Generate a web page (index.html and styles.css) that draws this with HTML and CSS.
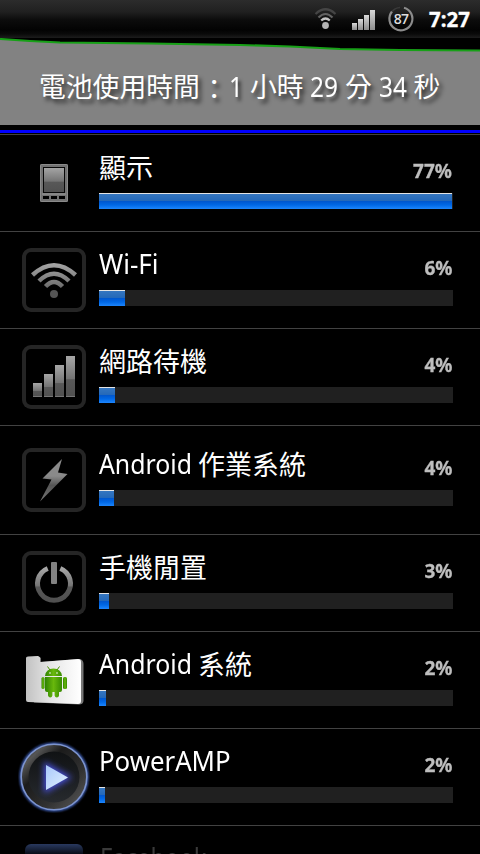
FILE: index.html
```
<!DOCTYPE html>
<html lang="zh-Hant">
<head>
<meta charset="utf-8">
<title>電池使用</title>
<link rel="stylesheet" href="styles.css">
</head>
<body>
<svg class="defs" width="0" height="0">
  <defs>
    <linearGradient id="metal" x1="0" y1="0" x2="0" y2="1"><stop offset="0" stop-color="#a6a6a6"/><stop offset=".55" stop-color="#747474"/><stop offset=".58" stop-color="#585858"/><stop offset="1" stop-color="#505050"/></linearGradient>
    <linearGradient id="bolt" x1="0" y1="0" x2="0" y2="1"><stop offset="0" stop-color="#8a8a8a"/><stop offset=".4" stop-color="#8a8a8a"/><stop offset=".62" stop-color="#555"/><stop offset="1" stop-color="#777"/></linearGradient>
    <linearGradient id="wave" gradientUnits="userSpaceOnUse" x1="0" y1="14" x2="0" y2="50"><stop offset="0" stop-color="#a8a8a8"/><stop offset=".6" stop-color="#777"/><stop offset="1" stop-color="#4c4c4c"/></linearGradient>
    <linearGradient id="silver" x1="0" y1="0" x2="0" y2="1"><stop offset="0" stop-color="#d8d8d8"/><stop offset="1" stop-color="#8c8c8c"/></linearGradient>
    <linearGradient id="folder" x1="0" y1="0" x2="1" y2="0"><stop offset="0" stop-color="#c2c2c2"/><stop offset=".45" stop-color="#e6e6e6"/><stop offset="1" stop-color="#fff"/></linearGradient>
    <linearGradient id="droid" x1="0" y1="0" x2="1" y2="0"><stop offset="0" stop-color="#2f8200"/><stop offset=".5" stop-color="#68b80c"/><stop offset="1" stop-color="#378a00"/></linearGradient>
    <linearGradient id="ring" x1="0" y1="0" x2="1" y2="1"><stop offset="0" stop-color="#222"/><stop offset=".18" stop-color="#555"/><stop offset=".35" stop-color="#1b1b1b"/><stop offset=".65" stop-color="#303030"/><stop offset=".85" stop-color="#4b4b4b"/><stop offset="1" stop-color="#222"/></linearGradient>
    <linearGradient id="disc" x1="0" y1="0" x2="0" y2="1"><stop offset="0" stop-color="#101214"/><stop offset="1" stop-color="#272a2e"/></linearGradient>
    <linearGradient id="play" x1="0" y1="0" x2="1" y2="1"><stop offset="0" stop-color="#a9c8fb"/><stop offset="1" stop-color="#e2f2ff"/></linearGradient>
    <filter id="glow" x="-60%" y="-60%" width="220%" height="220%"><feGaussianBlur stdDeviation="3"/></filter>
    <filter id="soft" x="-20%" y="-20%" width="140%" height="140%"><feGaussianBlur stdDeviation="1"/></filter>
  </defs>
</svg>

<div class="screen">
  <header class="status">
    <svg class="st-wifi" width="24" height="24" viewBox="0 0 24 24" fill="none">
      <path d="M1.500 7Q11.500-2.500 21.500 7" stroke="#454545" stroke-width="2.200"/>
      <path d="M4.500 10.500Q11.500 3.500 18.500 10.500" stroke="#626262" stroke-width="2.200"/>
      <path d="M7.200 13.500Q11.500 9.500 15.800 13.500" stroke="#c4c4c4" stroke-width="2.200"/>
      <circle cx="11.500" cy="18.500" r="3.400" fill="#b4b4b4"/>
    </svg>
    <svg class="st-signal" width="23" height="20" viewBox="0 0 23 20" fill="url(#silver)">
      <rect x="0" y="13" width="5" height="7"/><rect x="6" y="9" width="5" height="11"/><rect x="12" y="5" width="5" height="15"/><rect x="18" y="0" width="5" height="20"/>
    </svg>
    <svg class="st-batt" width="28" height="28" viewBox="0 0 28 28">
      <path d="M17 2.700A11.500 11.500 0 1 1 5 6.500" fill="none" stroke="#8c8c8c" stroke-width="2.200"/>
      <path d="M5 6.500A11.500 11.500 0 0 1 13 2.500" fill="none" stroke="#3a3a3a" stroke-width="1.600"/>
      <text x="14" y="19" class="batt-num" text-anchor="middle">87</text>
    </svg>
    <span class="clock">7:27</span>
  </header>

  <section class="chart">
    <svg class="curve" width="480" height="87" viewBox="0 0 480 87">
      <path d="M0 1L30 3L60 4.500L150 5.500L240 7L290 8.500L340 11L400 12L480 12.500V87H0Z" fill="#828282"/>
      <path d="M0 1L30 3L60 4.500L150 5.500L240 7L290 8.500L340 11L400 12L480 12.500" fill="none" stroke="#17a017" stroke-width="2.200"/>
    </svg>
    <div class="summary"><span class="label">電池使用時間<span class="colon">：</span></span><span class="num one">1</span><span class="unit two">小時</span><span class="num">29</span><span class="unit">分</span><span class="num">34</span><span class="unit">秒</span></div>
  </section>
  <div class="timeline"></div>

  <main class="list">
    <div class="row">
      <div class="icon"><svg width="28" height="38" viewBox="0 0 28 38">
        <rect width="28" height="38" rx="1.500" fill="#727272"/>
        <rect x="0.500" y="0.500" width="27" height="37" rx="1" fill="none" stroke="#8a8a8a"/>
        <rect x="3.500" y="3.500" width="21" height="25" fill="url(#metal)" stroke="#080808"/>
        <path d="M2 30H26" stroke="#999"/>
        <path d="M3 32H9V35H3ZM11 32H17V35H11ZM19 32H25V35H19Z" fill="#000"/>
      </svg></div>
      <div class="body"><div class="line"><span class="name">顯示</span><span class="pct">77%</span></div><div class="bar"><i style="width:353px"></i></div></div>
    </div>
    <div class="row">
      <div class="icon"><div class="tile"><svg width="64" height="64" viewBox="0 0 64 64" fill="none" stroke="url(#wave)" stroke-width="4.500">
        <path d="M10.500 27Q32 7.500 53.500 27"/><path d="M17 33Q32 18.500 47 33"/><path d="M23.500 38.500Q32 29.500 40.500 38.500"/>
        <circle cx="32" cy="46" r="4" fill="#555" stroke="none"/>
      </svg></div></div>
      <div class="body"><div class="line"><span class="name"><span class="lat wifi">Wi-Fi</span></span><span class="pct">6%</span></div><div class="bar"><i style="width:26px"></i></div></div>
    </div>
    <div class="row">
      <div class="icon"><div class="tile"><svg width="64" height="64" viewBox="0 0 64 64" fill="url(#metal)">
        <rect x="11" y="38" width="9" height="14"/><rect x="22" y="29" width="9" height="23"/><rect x="33" y="20" width="9" height="32"/><rect x="44" y="11" width="9" height="41"/>
        <path d="M11 51.500H20M22 51.500H31M33 51.500H42M44 51.500H53" stroke="#777"/>
      </svg></div></div>
      <div class="body"><div class="line"><span class="name">網路待機</span><span class="pct">4%</span></div><div class="bar"><i style="width:16px"></i></div></div>
    </div>
    <div class="row tall">
      <div class="icon"><div class="tile"><svg width="64" height="64" viewBox="0 0 64 64">
        <path d="M40 11L20.500 30.500L29.500 31.500L18 53.500L45.500 26L36 24.500Z" fill="url(#bolt)"/>
      </svg></div></div>
      <div class="body"><div class="line"><span class="name"><span class="lat android">Android</span>作業系統</span><span class="pct">4%</span></div><div class="bar"><i style="width:15px"></i></div></div>
    </div>
    <div class="row">
      <div class="icon"><div class="tile"><svg width="64" height="64" viewBox="0 0 64 64" fill="none">
        <path d="M25.700 17.500A16.500 16.500 0 1 0 38.300 17.500" stroke="url(#metal)" stroke-width="5"/>
        <rect x="29" y="11" width="6" height="22" rx="1" fill="#828282"/>
      </svg></div></div>
      <div class="body"><div class="line"><span class="name">手機閒置</span><span class="pct">3%</span></div><div class="bar"><i style="width:10px"></i></div></div>
    </div>
    <div class="row">
      <div class="icon"><svg width="64" height="64" viewBox="0 0 64 64">
        <path d="M6 10Q12 8 17 8.500L19 10V14L58 11Q61.500 12 61.500 16V53Q61 56.500 57 56.500L12 54.500Z" fill="#777"/>
        <path d="M4 10Q4 8.500 6 8.500L16 8L18 9.500V14L56 11Q59 11 59 14V53Q59 56 56 56L6 54Q4 54 4 52Z" fill="url(#folder)"/>
        <g fill="url(#droid)"><path d="M23 28Q24 20.500 31.500 20.500T40 28Z"/><path d="M23 29H40V42Q40 44 38 44H37V47.500Q36.700 49.500 34.800 49.500T32.600 47.500V44H30.400V47.500Q30 49.500 28.300 49.500T26 47.500V44H25Q23 44 23 42Z"/><rect x="19.500" y="29" width="3" height="12" rx="1.500"/><rect x="41" y="29" width="4" height="12" rx="1.500"/></g>
        <path d="M25.500 18.500L28 22M37.500 18.500L35 22" stroke="#458f00"/>
        <circle cx="28" cy="25" r=".8" fill="#fff"/><circle cx="35" cy="25" r=".8" fill="#fff"/>
      </svg></div>
      <div class="body"><div class="line"><span class="name"><span class="lat android">Android</span>系統</span><span class="pct">2%</span></div><div class="bar"><i style="width:7px"></i></div></div>
    </div>
    <div class="row">
      <div class="icon"><svg class="amp" width="72" height="72" viewBox="0 0 72 72">
        <circle cx="36" cy="36" r="33.300" fill="none" stroke="#4162bd" stroke-width="2.500" filter="url(#soft)"/>
        <circle cx="36" cy="36" r="32.800" fill="url(#ring)" stroke="#7d94cd" stroke-width="1.600"/>
        <circle cx="36" cy="36" r="25.500" fill="url(#disc)"/>
        <path d="M28 24L50 36.500L28 49Z" fill="#4650dc" stroke="#4650dc" stroke-width="4" filter="url(#glow)"/>
        <path d="M28 24L50 36.500L28 49Z" fill="url(#play)"/>
      </svg></div>
      <div class="body"><div class="line"><span class="name"><span class="lat poweramp">PowerAMP</span></span><span class="pct">2%</span></div><div class="bar"><i style="width:6px"></i></div></div>
    </div>
    <div class="row last">
      <div class="icon"><div class="fb"></div></div>
      <div class="body"><div class="line"><span class="name"><span class="lat facebook">Facebook</span></span></div></div>
    </div>
  </main>
</div>
</body>
</html>
```
FILE: styles.css
```
* { box-sizing: border-box; }
body { margin: 0; background: #000; }
.defs { display: block; height: 0; }
.screen {
  width: 480px; height: 854px; overflow: hidden; background: #000; color: #fff;
  font-family: "Noto Sans", "Noto Sans CJK TC", sans-serif;
}
.screen svg { display: block; }

.status {
  height: 38px; display: flex; align-items: flex-start; justify-content: flex-end; padding-right: 9px;
  background: linear-gradient(#2c2c2c 0, #202020 12px, #0c0c0c 20px, #030303 30px, #0a0a0a 34px, #1c1c1c 38px);
}
.st-wifi { margin: 7px 14px 0 0; }
.st-signal { margin: 10px 12px 0 0; }
.st-batt { margin: 5px 14px 0 0; }
.batt-num { font: 600 14px "Open Sans", sans-serif; fill: #ddd; letter-spacing: -.7px; }
.clock { width: 42px; font: bold 20.500px/38px "Noto Sans", sans-serif; white-space: nowrap; -webkit-text-stroke: .3px #fff; }

.chart { height: 87px; display: grid; }
.curve, .summary { grid-area: 1 / 1; }
.summary {
  display: flex; padding-left: 39px; height: 96px; line-height: 97px; font-size: 26.800px; white-space: nowrap;
  text-shadow: 3px 4px 4px rgba(0, 0, 0, .65);
}
.label { width: 190px; }
.colon { display: inline-block; line-height: 1; transform: translate(1px, 2px); }
.num { width: 35px; transform: scaleX(.91); transform-origin: 0 50%; }
.num.one { width: 21px; }
.unit { width: 33.500px; }
.unit.two { width: 60px; }
.timeline { height: 10px; border-bottom: 1px solid #424242; background: linear-gradient(#000 5px, #00f 5px, #00f 8px, #000 8px); }

.row { height: 97px; display: flex; align-items: center; border-bottom: 1px solid #424242; }
.row.tall { height: 109px; }
.icon { width: 99px; padding-left: 9px; display: flex; justify-content: center; flex: none; }
.tile { width: 64px; height: 64px; border-radius: 9px; box-shadow: inset 0 0 0 4px #252525; }
.body { width: 354px; height: 96px; }
.line { display: flex; justify-content: space-between; height: 58px; }
.name { font-size: 27px; line-height: 66px; white-space: nowrap; display: flex; }
.lat { display: inline-block; line-height: 64px; transform-origin: 0 50%; transform: scaleX(.92); }
.lat.android { width: 99px; }
.lat.wifi { transform: scaleX(.965); }
.lat.poweramp { transform: scaleX(.955); }
.lat.facebook { transform: scaleX(.88); margin-left: 1px; }
.pct { font: bold 20px/71px "Noto Sans", sans-serif; color: #bebebe; transform: scaleX(.95); transform-origin: 100% 50%; margin-right: 1px; -webkit-text-stroke: .3px #bebebe; }
.bar { height: 16px; background: #202020; }
.bar i {
  display: block; height: 16px;
  background: linear-gradient(#e4e4e4 1px, #3576c0 1px, #2468b8 8px, #0055cc 8px, #0068e6 12px, #1e86fc 16px);
}
.last { border: 0; height: 28px; align-items: flex-start; overflow: hidden; }
.last .icon { padding-top: 18px; }
.fb { width: 58px; height: 40px; border-radius: 6px; background: linear-gradient(#29395f, #090d18 10px); }
.last .name { color: #3a3a3a; }
```
